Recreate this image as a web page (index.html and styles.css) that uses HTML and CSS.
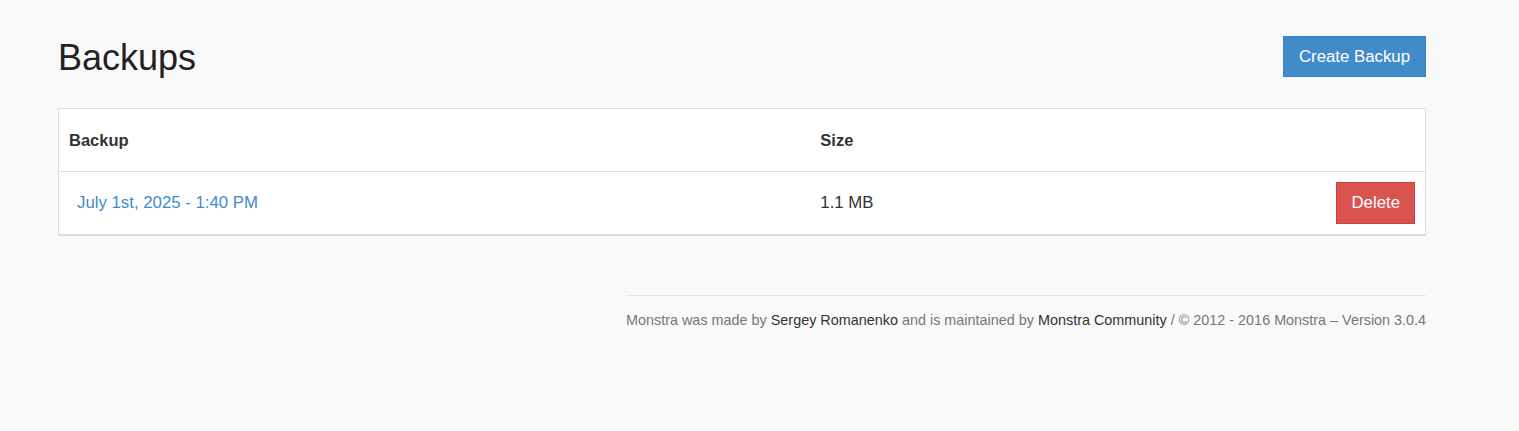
FILE: index.html
```html
<!DOCTYPE html>
<html lang="en">
<head>
<meta charset="utf-8">
<title>Backups</title>
<link rel="stylesheet" href="styles.css">
</head>
<body>
<div class="page">
  <div class="page-header">
    <h1 class="title">Backups</h1>
    <a class="btn btn-primary" href="#">Create Backup</a>
  </div>
  <table class="table">
    <thead>
      <tr>
        <th class="col-name">Backup</th>
        <th class="col-size">Size</th>
        <th class="col-actions"></th>
      </tr>
    </thead>
    <tbody>
      <tr>
        <td><a class="backup-link" href="#">July 1st, 2025 - 1:40 PM</a></td>
        <td>1.1 MB</td>
        <td class="actions"><a class="btn btn-danger" href="#">Delete</a></td>
      </tr>
    </tbody>
  </table>
  <div class="footer">
    <p>Monstra was made by <a href="#">Sergey Romanenko</a> and is maintained by <a href="#">Monstra Community</a> / © 2012 - 2016 Monstra – Version 3.0.4</p>
  </div>
</div>
</body>
</html>
```

FILE: styles.css
```css
html, body {
  margin: 0;
  padding: 0;
}
body {
  background: #f9f9f9;
  font-family: "Liberation Sans", Arial, Helvetica, sans-serif;
  color: #333;
  font-size: 16.8px;
  line-height: 20px;
}
.page {
  padding: 36px 93px 40px 58px;
}
.page-header {
  display: flex;
  justify-content: space-between;
  align-items: flex-start;
  margin-bottom: 30px;
}
.title {
  margin: 2px 0 0 0;
  font-size: 36px;
  line-height: 40px;
  font-weight: 400;
  color: #222;
}
.btn {
  display: inline-block;
  padding: 10px 15px;
  font-size: 16.8px;
  line-height: 20px;
  border: 1px solid transparent;
  text-decoration: none;
  color: #fff;
}
.btn-primary {
  background: #428bca;
  border-color: #3b84c4;
  padding: 10px 15px 9px;
}
.btn-danger {
  background: #d9534f;
  border-color: #d43f3a;
  padding: 10px 14px;
}
.table {
  width: 100%;
  border-collapse: collapse;
  background: #fff;
  border: 1px solid #ddd;
  border-bottom: 2px solid #ddd;
}
.table th {
  text-align: left;
  font-weight: 700;
  font-size: 16.5px;
  padding: 21px 10px;
  line-height: 20px;
  color: #333;
}
.col-name {
  width: 55%;
}
.table td {
  padding: 10px;
  border-top: 1px solid #ddd;
  vertical-align: middle;
  line-height: 20px;
}
.backup-link {
  color: #428bca;
  text-decoration: none;
  padding-left: 8px;
}
.actions {
  text-align: right;
}
.footer {
  width: 800px;
  margin: 59px 0 0 auto;
  border-top: 1px solid #e5e5e5;
}
.footer p {
  margin: 0;
  padding-top: 14px;
  font-size: 14.4px;
  line-height: 20px;
  color: #777;
  text-align: right;
  white-space: nowrap;
}
.footer a {
  color: #333;
  text-decoration: none;
}
```
